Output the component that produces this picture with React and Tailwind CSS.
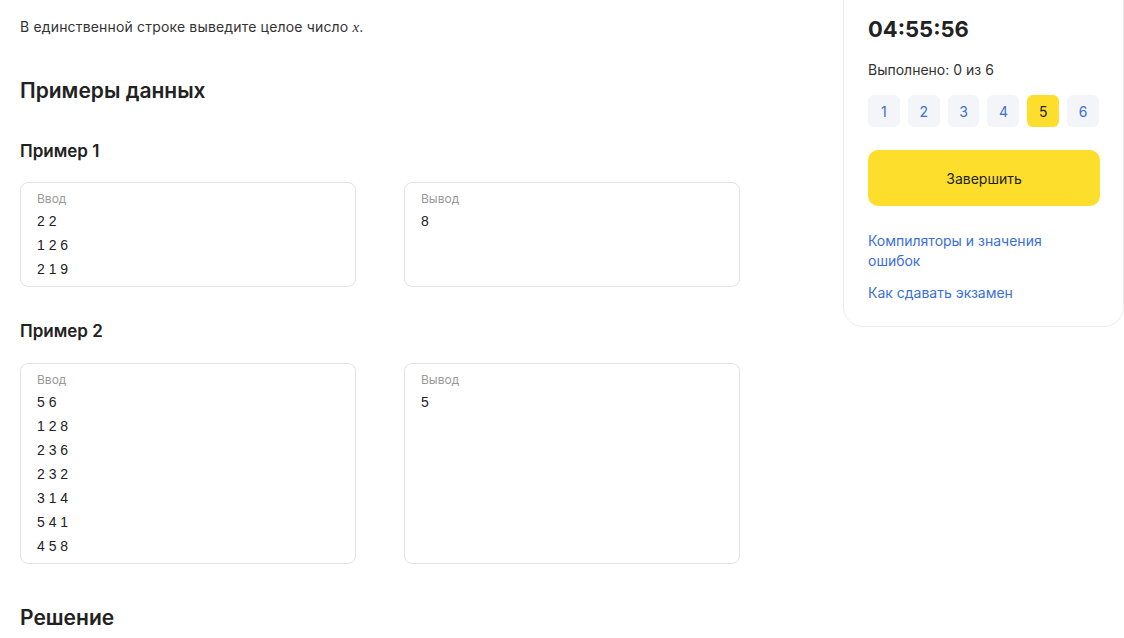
import React from 'react';

const font = { fontFamily: 'Inter, "Noto Sans", sans-serif' };

const Sample = ({ input, output }) => (
  <div className="grid grid-cols-[336px_336px] gap-x-[48px]">
    {[['Ввод', input], ['Вывод', output]].map(([label, lines]) => (
      <div key={label} className="border border-[#e3e3e3] rounded-[8px] px-[16px] pt-[8px] pb-[5px] h-full">
        <div className="text-[12px] leading-[16px] text-[#999]">{label}</div>
        <div className="mt-[2px] text-[14px] leading-[24px] text-[#222] font-['Liberation_Sans',Arial,sans-serif]">
          {lines.map((l, i) => <div key={i}>{l}</div>)}
        </div>
      </div>
    ))}
  </div>
);

export default function App() {
  return (
    <div className="w-[1124px] h-[638px] overflow-hidden bg-white text-[#333] flex" style={font}>
      <main className="w-[843px] pl-[20px] pt-[17px]">
        <p className="text-[14px] leading-[20px] tracking-[0.012em] text-[#333]">
          В единственной строке выведите целое число <span className="italic font-['Liberation_Serif',serif] text-[15px]">x</span>.
        </p>
        <h2 className="mt-[40px] text-[21px] leading-[28px] font-semibold text-[#222]">Примеры данных</h2>
        <h3 className="mt-[34px] text-[17px] leading-[24px] font-semibold text-[#222]">Пример 1</h3>
        <div className="mt-[19px]">
          <Sample input={['2 2', '1 2 6', '2 1 9']} output={['8']} />
        </div>
        <h3 className="mt-[32px] text-[17px] leading-[24px] font-semibold text-[#222]">Пример 2</h3>
        <div className="mt-[20px]">
          <Sample input={['5 6', '1 2 8', '2 3 6', '2 3 2', '3 1 4', '5 4 1', '4 5 8']} output={['5']} />
        </div>
        <h2 className="mt-[40px] text-[21px] leading-[28px] font-semibold text-[#222]">Решение</h2>
      </main>
      <aside className="w-[281px] self-start -mt-[20px] border border-[#ececec] rounded-[20px] px-[24px] pt-[32px] pb-[23px]">
        <div className="text-[22px] leading-[32px] font-bold text-[#222]">04:55:56</div>
        <div className="mt-[15px] text-[14px] leading-[20px] text-[#333]">Выполнено: 0 из 6</div>
        <div className="mt-[15px] flex gap-[8px]">
          {[1, 2, 3, 4, 5, 6].map((n) => (
            <div
              key={n}
              className={
                n === 5
                  ? 'w-[32px] h-[32px] rounded-[6px] bg-[#fdde2c] text-[#222] text-[14px] flex items-center justify-center'
                  : 'w-[32px] h-[32px] rounded-[6px] bg-[#f3f5f8] text-[#3b6fd8] text-[14px] flex items-center justify-center'
              }
            >
              {n}
            </div>
          ))}
        </div>
        <button className="mt-[23px] w-[232px] h-[56px] rounded-[10px] bg-[#fdde2c] text-[14px] text-[#222]">Завершить</button>
        <div className="mt-[25px] text-[14px] leading-[20px] text-[#3b6fd8]">
          <div className="w-[200px]">Компиляторы и значения ошибок</div>
          <div className="mt-[12px]">Как сдавать экзамен</div>
        </div>
      </aside>
    </div>
  );
}
